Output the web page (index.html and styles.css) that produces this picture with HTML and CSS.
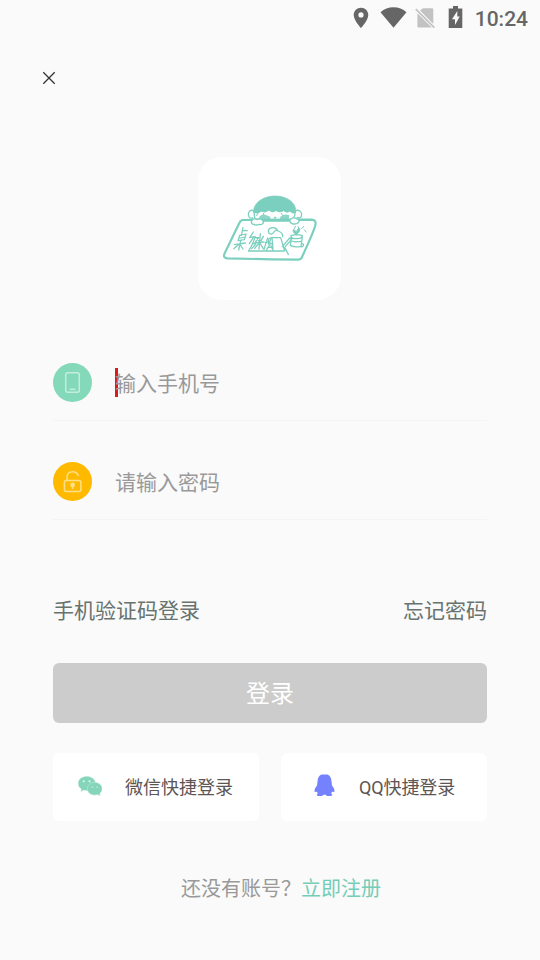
FILE: index.html
```html
<!DOCTYPE html>
<html lang="zh-CN">
<head>
<meta charset="utf-8">
<title>登录</title>
<link rel="stylesheet" href="styles.css">
</head>
<body>
<div class="screen">
  <header class="status">
    <svg class="pin" width="16" height="22" viewBox="0 0 16 22"><path fill-rule="evenodd" d="M8 .8C3.900.8.700 4 .7 8c0 5.300 7.300 13 7.300 13s7.300-7.700 7.300-13c0-4-3.200-7.200-7.300-7.200zM8 5.300a2.600 2.600 0 1 1 0 5.200 2.600 2.600 0 0 1 0-5.200z"/></svg>
    <svg class="wifi" width="27" height="22" viewBox="0 0 27 22"><path d="M.500 5.200Q6 .300 13.500.300T26.500 5.200L13.500 20.700z"/></svg>
    <svg class="sim" width="21" height="22" viewBox="0 0 21 22"><path d="M8 1.200h9q1.300 0 1.300 1.300V17L5 3.600zM2.400 6.300 16.800 20.500H3.700q-1.300 0-1.300-1.300z"/><path class="slash" d="M.800 2.200 19.300 20.700"/></svg>
    <svg class="battery" width="15" height="23" viewBox="0 0 15 23"><path fill-rule="evenodd" d="M5 0h5v2.500h4.300V22H.700V2.500H5zM9.300 5 4 13.300h3v5.700l4.700-8.400H9.300z"/></svg>
    <span class="time">10:24</span>
  </header>

  <svg class="close" width="14" height="14" viewBox="0 0 14 14"><path d="M1.300 1.300 12.700 12.700M12.700 1.300 1.300 12.700"/></svg>

  <div class="logo">
    <svg width="143" height="143" viewBox="24 21 429 429">
      <path class="face" d="M192 184Q194 214 199 213L306 213Q316 199 316 184"/>
      <path class="hair" d="M191 187C188 164 214 138 255 138C296 138 321 163 317 187Q307 193 300 184Q290 191 281 182Q270 190 258 182Q246 190 237 181Q224 190 215 184Q202 193 191 187z"/>
      <path class="cheek" d="M207 201q12-12 25-4l9 3v11h-31zM271 200q12-10 27-4l-2 15h-27z"/>
      <path class="fine" d="M205 187l-5 10M220 190v5M274 190l3 5M253 202h5M255 202v4"/>
      <path class="line" d="M190 182c-8-4-15 3-15 11 0 9 5 12 13 11M317 182c8-4 19 2 18 12-1 9-6 12-13 8"/>
      <path class="board" d="M157 210L366 209Q380 211 376 226Q371 246 335 323Q332 330 321 329L245 328L111 325Q99 323 103 312Q126 264 148 219Q151 212 157 210z"/>
      <path class="hand" d="M185 213c3-8 12-8 17-4 6-6 16-1 18 6 1 8-7 10-13 8-7 3-12 2-15 0-7 0-9-5-7-10zM299 212c4-10 15-10 23-5 9 4 5 11-2 14-10 3-20-1-21-9z"/>
      <path class="line" d="M159 233l-5 23M158 242h14M149 256l19-4-5 17-19 3 5-16M150 264l16-3M133 284l33-5M152 272l-6 28M147 283l-16 13M150 283l9 14"/>
      <path class="line" d="M190 246l-11 17 13-3-14 21M196 260q-8 25-20 43M196 262l10 1-9 12M187 280l11 2-13 14M211 251l-4 46M199 263l7 9M220 259l-7 13M195 278l27-2M208 278l-14 17M209 278l11 18"/>
      <path class="line" d="M233 264l-11 34M226 278l13-3M243 267l-8 15 14-1M238 286l-8 13M243 287l4 10M236 292h12M176 303h105"/>
      <path class="line" d="M235 244c0-13 22-15 28-2M235 244c1 9 12 11 16 3 4-7 10-7 14-4 8 3 14 8 13 17M246 263h26l12 40M246 263l3 39M244 263c-10 2-12 11-4 15M277 290l22-26 8 1-23 27 11 21"/>
      <path class="line" d="M303 257q17-6 34 0-2 10-17 9-17 1-17-9zM304 261l-3 26q16 6 32 2l4-28M304 273q15 5 32 0M334 282c7-3 10 6 1 9"/>
      <path class="leaf" d="M319 254c-6-3-12-11-9-15 6 0 9 7 9 15zM320 253c-2-8 2-17 8-18 3 6-1 14-8 18zM312 237l5-8M329 239l-5-9M335 236l6-7M343 240l5 6"/>
    </svg>
  </div>

  <form class="form">
    <label class="field">
      <svg width="39" height="39" viewBox="0 0 39 39"><circle class="mint" cx="19.500" cy="19.500" r="19.500"/><rect class="phone" x="12.700" y="9.700" width="13.600" height="19.600" rx="2"/><path class="phone" d="M16.500 26.300h6"/></svg>
      <span class="placeholder active"><span>输入手机号</span></span>
    </label>
    <label class="field">
      <svg width="39" height="39" viewBox="0 0 39 39"><circle class="gold" cx="19.500" cy="19.500" r="19.500"/><rect class="lock" x="11.400" y="18.500" width="16.500" height="11" rx="2"/><path class="lock" d="M14 18V15.500c0-7 9-7.500 11.500-1.500"/><circle class="keyhole" cx="19.600" cy="23" r="2.400"/><path class="lock" d="M19.600 23v4"/></svg>
      <span class="placeholder"><span>请输入密码</span></span>
    </label>
  </form>

  <nav class="links"><span>手机验证码登录</span><span>忘记密码</span></nav>
  <div class="submit">登录</div>

  <div class="social">
    <div class="option wechat">
      <svg width="24" height="20" viewBox="0 0 24 20"><path class="bubble" d="M8.700.500C3.500.500.300 3.700.300 7.500c0 2.400 1.200 4.300 3.300 5.600l-.700 2.500 3-1.500q2 .6 4 .4c-1-5 3-8.300 7.600-8C16.500 2.700 13 .500 8.700.500z"/><path class="bubble" d="M16.700 6.500c-4.300 0-7.300 2.700-7.300 6.200s3.100 6.300 7.300 6.300q1.500 0 2.800-.4l2.600 1-.4-2.100c1.500-1.200 2.300-2.700 2.300-4.800 0-3.500-3.100-6.200-7.300-6.200z"/><g class="eyes"><circle cx="5.800" cy="5.200" r="1"/><circle cx="11.500" cy="5.200" r="1"/><circle cx="14.200" cy="11.100" r=".7"/><circle cx="19" cy="11.100" r=".7"/></g></svg>
      <span>微信快捷登录</span>
    </div>
    <div class="option qq">
      <svg width="21" height="23" viewBox="0 0 21 23"><path d="M7.500.500h6C16 1.500 17.300 4 17.500 7.500l.5 4c1.600 1.800 2.500 3.800 2.500 5.500 0 1-1 1.100-2.500.8l-.8 1.700c1.600 1.500 1.300 2.500-.7 2.500h-3.500l-1.500-1.300h-2L8 22H4.500c-2 0-2.300-1-.7-2.500L3 17.800c-1.500.3-2.500.2-2.500-.8 0-1.700.9-3.700 2.500-5.500l.5-4C3.700 4 5 1.500 7.500.500z"/></svg>
      <span>QQ快捷登录</span>
    </div>
  </div>

  <footer class="register">还没有账号？<span>立即注册</span></footer>
</div>
</body>
</html>
```
FILE: styles.css
```css
* { box-sizing: border-box; }
body {
  margin: 0;
  background: #fafafa;
  font-family: Roboto, "Noto Sans CJK SC", sans-serif;
}
svg { display: block; flex: none; fill: none; }
.screen {
  width: 540px;
  height: 960px;
  display: flex;
  flex-direction: column;
  padding: 0 53px;
  overflow: hidden;
}
.status {
  height: 36px;
  margin-right: -41px;
  display: flex;
  justify-content: flex-end;
  align-items: center;
  color: #666;
}
.status path { fill: #666; }
.pin { margin-right: 11px; }
.wifi { margin-right: 8px; }
.sim { margin-right: 12px; }
.sim path { fill: #c2c2c2; }
.sim .slash { stroke: #c2c2c2; stroke-width: 1.7; }
.battery { margin: 0 11.5px 2px 0; }
.time { font-size: 21px; font-weight: 500; line-height: 36px; padding-top: 1px; }
.close { margin: 35px 0 0 -11px; stroke: #333; stroke-width: 1.3; }
.logo {
  width: 143px;
  height: 143px;
  margin: 72px 0 0 145px;
  border-radius: 24px;
  background: #fff;
  overflow: hidden;
}
.logo path { stroke: #7bcfbe; stroke-linecap: round; stroke-linejoin: round; }
.face { stroke-width: 4; }
.logo .hair { fill: #7bcfbe; stroke-width: 2; }
.logo .cheek { fill: #8ed6c7; stroke: none; }
.fine { stroke-width: 3; }
.line { stroke-width: 3.8; }
.board { stroke-width: 6.5; }
.hand { fill: #fff; stroke-width: 4; }
.leaf { fill: #7bcfbe; stroke-width: 3; }
.form {
  margin-top: 45px;
  display: flex;
  flex-direction: column;
  gap: 23px;
}
.field {
  height: 76px;
  display: flex;
  align-items: center;
  gap: 23px;
  border-bottom: 1px solid #f4f4f4;
}
.mint { fill: #84d9ba; }
.gold { fill: #ffba00; }
.phone { stroke: #c4eddd; stroke-width: 1.5; }
.lock { stroke: #ffe08a; stroke-width: 1.5; }
.keyhole { fill: #ffe08a; }
.placeholder {
  position: relative;
  font-size: 21px;
  line-height: 30px;
  color: #999;
}
.placeholder span { display: block; padding-top: 1px; margin-bottom: -1px; }
.active::before {
  content: "";
  position: absolute;
  left: 0;
  top: 0;
  width: 3px;
  height: 29px;
  background: #d91c1c;
  z-index: -1;
}
.links {
  height: 30px;
  margin-top: 76px;
  display: flex;
  justify-content: space-between;
  font-size: 21px;
  line-height: 30px;
  color: #68736e;
}
.submit {
  height: 60px;
  margin-top: 37px;
  border-radius: 6px;
  background: #ccc;
  color: #fff;
  font-size: 24px;
  line-height: 62px;
  text-align: center;
}
.social {
  margin-top: 30px;
  display: grid;
  grid-template-columns: 1fr 1fr;
  gap: 22px;
}
.option {
  height: 68px;
  display: flex;
  align-items: center;
  border-radius: 6px;
  background: #fff;
  color: #5d5454;
  font-size: 18px;
}
.option svg { margin-bottom: 3px; }
.option span { padding-bottom: 2px; }
.wechat { padding-left: 25px; gap: 23px; }
.qq { padding-left: 33px; gap: 24px; }
.qq span { letter-spacing: -.1px; }
.bubble { fill: #84d5b9; stroke: #b9e7d8; stroke-width: .5; }
.eyes { fill: #e6f7f1; }
.qq path { fill: #7582ff; }
.register {
  margin: 53px 0 0 128px;
  font-size: 20px;
  line-height: 30px;
  color: #999;
  white-space: nowrap;
}
.register span { color: #75cdb8; }
```
